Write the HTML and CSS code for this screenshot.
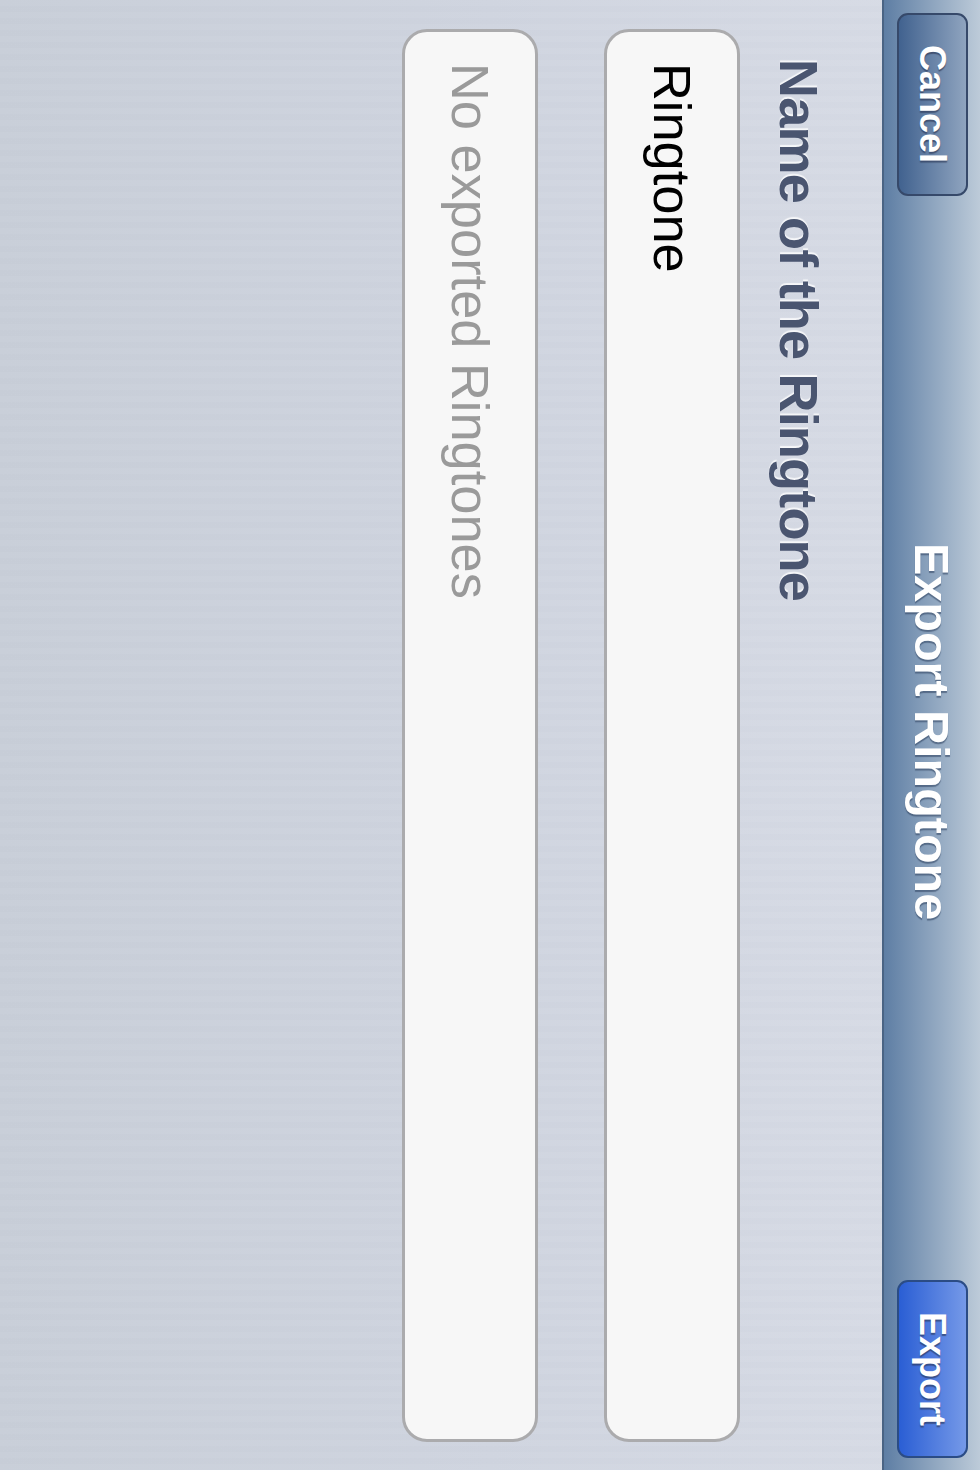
FILE: index.html
```html
<!DOCTYPE html>
<html lang="en">
<head>
    <meta charset="UTF-8">
    <meta name="viewport" content="width=device-width, initial-scale=1.0">
    <title>Export Ringtone</title>
    <link rel="stylesheet" href="styles.css">
</head>
<body>
    <div class="screen">
        <div class="navbar">
            <div class="botao botao-cancel">Cancel</div>
            <div class="titulo">Export Ringtone</div>
            <div class="botao botao-export">Export</div>
        </div>
        <div class="conteudo">
            <div class="rotulo">Name of the Ringtone</div>
            <div class="campo">Ringtone</div>
            <div class="campo campo-vazio">No exported Ringtones</div>
        </div>
    </div>
</body>
</html>
```

FILE: styles.css
```css
html, body { margin: 0; padding: 0; }
body { font-family: "Liberation Sans", Arial, sans-serif; }

/* the whole screen is sideways, so the flow runs right to left */
.screen {
    writing-mode: vertical-rl;
    width: 980px;
    height: 1470px;
    overflow: hidden;
    display: flex;
    flex-direction: column;
    background:
        repeating-linear-gradient(to bottom, rgba(255,255,255,.025) 0, rgba(255,255,255,.025) 6px, rgba(120,130,150,.012) 6px, rgba(120,130,150,.012) 12px),
        linear-gradient(to right, #c8ced8, #cfd4df 50%, #d8dce6);
}

.navbar {
    block-size: 98px;
    flex: none;
    box-sizing: border-box;
    display: flex;
    align-items: center;
    padding-inline: 13px 12px;
    border-left: 2px solid #4a6484;
    background: linear-gradient(to right, #5e7ea4, #bdcbd9);
}
.titulo {
    flex: 1;
    padding-inline-end: 12px;
    text-align: center;
    font-size: 48.5px;
    font-weight: bold;
    color: #fff;
    text-shadow: 2px 0 1px rgba(50,70,100,.6);
}
.botao {
    flex: none;
    box-sizing: border-box;
    inline-size: 183px;
    block-size: 71px;
    border: 2px solid #36496a;
    border-radius: 11px;
    display: flex;
    align-items: center;
    justify-content: center;
    font-size: 36px;
    font-weight: bold;
    color: #fff;
    text-shadow: 2px 0 1px rgba(40,50,80,.6);
}
.botao-cancel { background: linear-gradient(to right, #41628f, #8fa4bf); }
.botao-export { inline-size: 178px; border-color: #2b4c85; background: linear-gradient(to right, #2a5ed4, #7599e8); }

.conteudo {
    flex: 1;
    padding-inline: 29px;
}
.rotulo {
    margin-block: 44px 20px;
    padding-inline-start: 30px;
    block-size: 78px;
    line-height: 78px;
    font-size: 54px;
    letter-spacing: -.8px;
    font-weight: bold;
    color: #4a5570;
    text-shadow: -2px 0 1px rgba(255,255,255,.8);
}
.campo {
    box-sizing: border-box;
    inline-size: 1413px;
    block-size: 136px;
    margin-block-end: 66px;
    padding-inline: 31px;
    line-height: 130px;
    border: 3px solid #ababad;
    border-radius: 25px;
    background: #f7f7f7;
    font-size: 52.4px;
    color: #000;
}
.campo-vazio { color: #9a9a9a; }
```
